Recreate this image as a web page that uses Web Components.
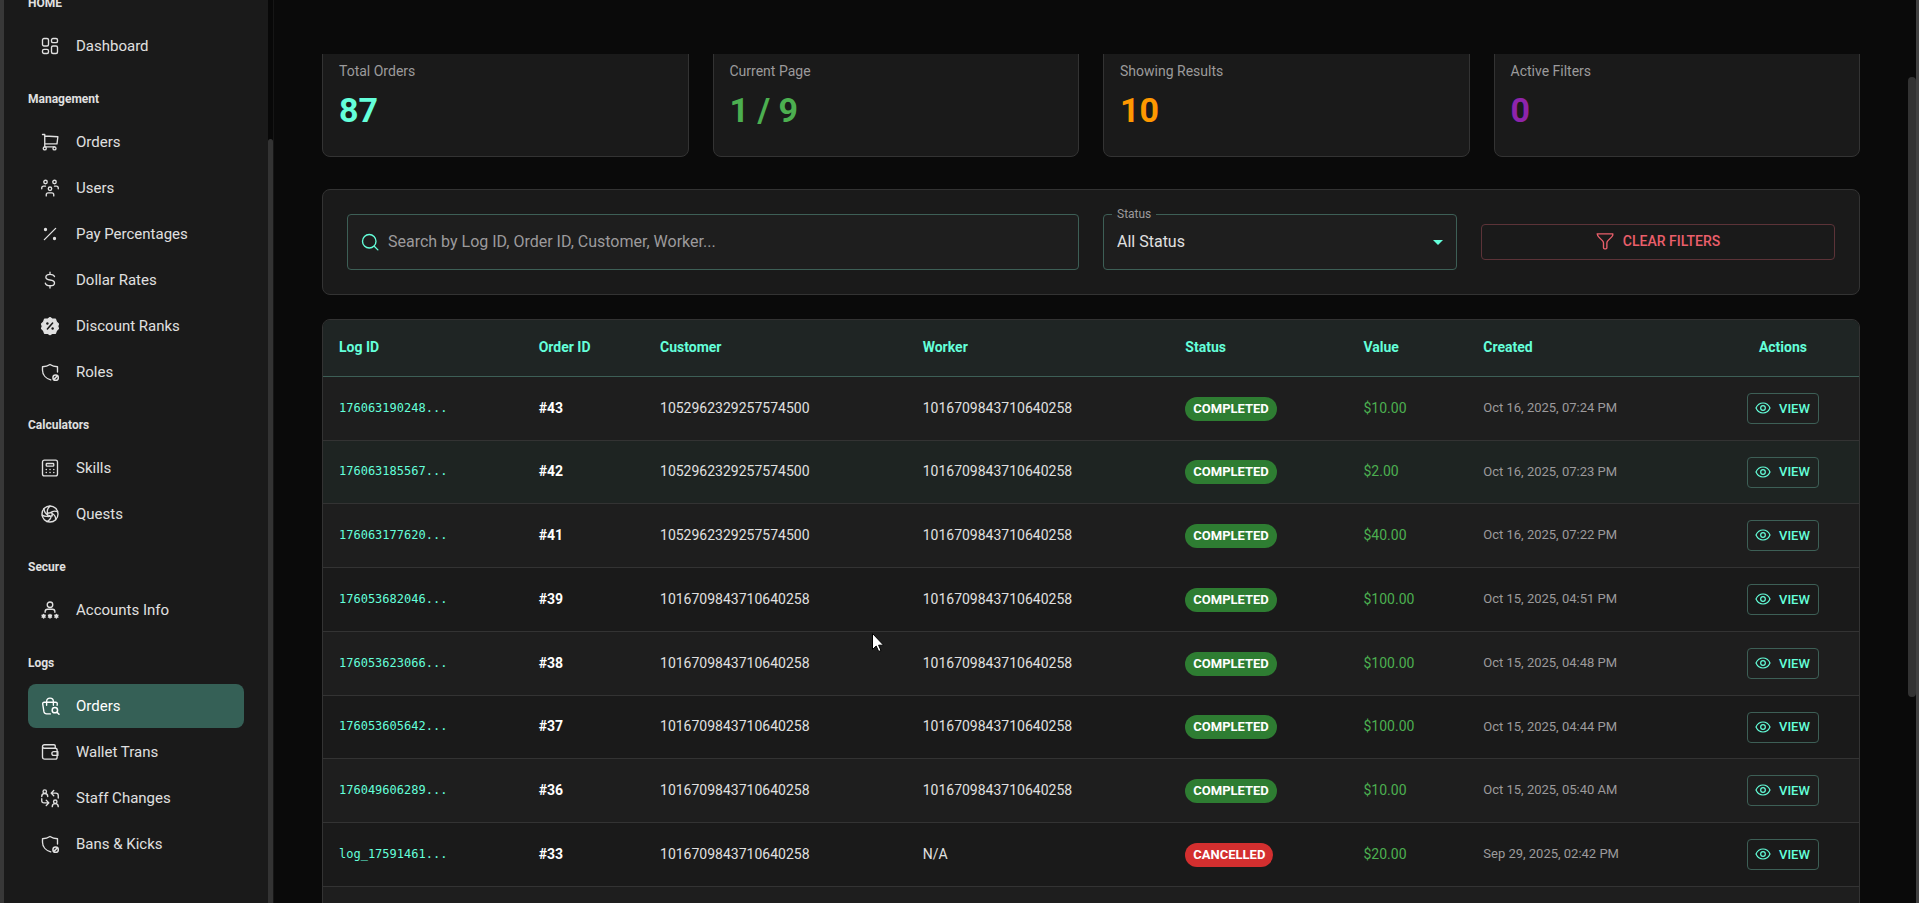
<!DOCTYPE html>
<html lang="en">
<head>
<meta charset="utf-8">
<meta name="viewport" content="width=device-width, initial-scale=1">
<title>Order Logs</title>
<style>
    :root {
        --accent: #64ffda;
        --bg: #0a0a0a;
        --panel: #1a1a1a;
        --panel-alt: #1e1e1e;
        --line: #333333;
        --accent-line: #3d5f56;
        --muted: #9c9a9c;
    }
    html, body {
        height: 100%;
        margin: 0;
    }
    body {
        background: var(--bg);
        color: #e0e0e0;
        font-family: Roboto, "Liberation Sans", sans-serif;
        font-size: 14px;
        overflow: hidden;
    }
</style>
</head>
<body>
<admin-app>
    <side-nav slot="nav">
        <nav-group label="HOME">
            <nav-item icon="dashboard">Dashboard</nav-item>
        </nav-group>
        <nav-group label="Management">
            <nav-item icon="cart">Orders</nav-item>
            <nav-item icon="users">Users</nav-item>
            <nav-item icon="percent">Pay Percentages</nav-item>
            <nav-item icon="dollar">Dollar Rates</nav-item>
            <nav-item icon="discount">Discount Ranks</nav-item>
            <nav-item icon="shield">Roles</nav-item>
        </nav-group>
        <nav-group label="Calculators">
            <nav-item icon="calculator">Skills</nav-item>
            <nav-item icon="aperture">Quests</nav-item>
        </nav-group>
        <nav-group label="Secure">
            <nav-item icon="account">Accounts Info</nav-item>
        </nav-group>
        <nav-group label="Logs">
            <nav-item icon="bag" active>Orders</nav-item>
            <nav-item icon="wallet">Wallet Trans</nav-item>
            <nav-item icon="swap">Staff Changes</nav-item>
            <nav-item icon="shield">Bans &amp; Kicks</nav-item>
        </nav-group>
    </side-nav>
    <stat-row>
        <stat-card label="Total Orders" style="--tone: #64ffda">87</stat-card>
        <stat-card label="Current Page" style="--tone: #4caf50">1 / 9</stat-card>
        <stat-card label="Showing Results" style="--tone: #ff9800">10</stat-card>
        <stat-card label="Active Filters" style="--tone: #8e24aa">0</stat-card>
    </stat-row>
    <filter-bar></filter-bar>
    <orders-table></orders-table>
</admin-app>
<mouse-pointer></mouse-pointer>

<script>
const ICONS = {
    dashboard: '<rect x="2" y="2" width="8" height="10" rx="2"/><rect x="14" y="2" width="8" height="5.500" rx="2"/><rect x="14" y="12" width="8" height="10" rx="2"/><rect x="2" y="16.500" width="8" height="5.500" rx="2"/>',
    cart: '<circle cx="5" cy="20.500" r="2"/><circle cx="18" cy="20.500" r="2"/><path d="M18 18.500H5V2H2M5 4l17.500 1-1.200 9.500H5"/>',
    users: '<circle cx="6" cy="4" r="2.300"/><circle cx="18" cy="4" r="2.300"/><circle cx="12" cy="13" r="2.300"/><path d="M1 13v-1c0-1.500 1-2.500 2.500-2.500H6M23 13v-1c0-1.500-1-2.500-2.500-2.500H18M7 22.500V21c0-1.400 1-2.500 2.500-2.500h5c1.500 0 2.500 1.100 2.500 2.500v1.500"/>',
    percent: '<path d="M19.500 4.500l-15 15"/><circle cx="6" cy="6" r="1.300" fill="currentColor"/><circle cx="18" cy="18" r="1.300" fill="currentColor"/>',
    dollar: '<path d="M18 7.500C17.300 5.500 15 4.500 12 4.500c-3.500 0-5.500 1.600-5.500 3.800 0 2.300 2 3.200 5.500 3.700 3.800.5 6 1.500 6 3.900 0 2.200-2.300 3.800-6 3.800-3.300 0-5.600-1.300-6.200-3.400M12 1.500v3M12 19.700v3"/>',
    discount: '<path fill="currentColor" d="M12 .8l3.200 2.200 4-.2 1.300 3.700 2.700 2.800-1 3 1 3-2.700 2.800-1.300 3.700-4-.2-3.200 1.900-3.200-1.900-4 .2-1.300-3.700L.8 15.300l1-3-1-3 2.700-2.800 1.300-3.700 4 .2z"/><path stroke="#1a1a1a" stroke-width="2" d="M15.500 8l-7 8"/><circle cx="8.500" cy="8.700" r="1.600" fill="#1a1a1a" stroke="none"/><circle cx="15.500" cy="15.300" r="1.600" fill="#1a1a1a" stroke="none"/>',
    shield: '<path d="M13 22.500c-6-1.700-11-6.500-11-13V5c3.800 0 7.200-1 10-3 2.800 2 6.200 3 10 3v7"/><circle cx="19.500" cy="19.500" r="3.600" stroke-width="2"/><path stroke-width="2" d="M17.200 21.800l4.600-4.600"/>',
    calculator: '<rect x="2" y="1.500" width="20" height="21" rx="2.500"/><rect x="7" y="6" width="10" height="3.500" rx="1"/><path stroke-width="2" d="M7 14h.1M12 14h.1M17 14h.1M7 18h.1M12 18h.1M17 18h.1"/>',
    aperture: '<circle cx="12" cy="12" r="10.700"/><path d="M12 1.500c-3 2-4 5.500-3.500 9.500M22 9c-3.300-1.600-6.800-.9-10 1.500M19.500 19.500c.3-3.700-1.600-6.700-5-8.500M8 22c3.200-1.400 5.200-4 5.700-7.500M1.500 13.500c3 2 6.500 2 10 .500M4 5c.2 3.700 1.800 6.500 5 8.500M8.500 11l6-1 .5 4.500-5.500 1z"/>',
    account: '<circle cx="12" cy="5" r="3.700"/><path d="M5.500 15v-1c0-2 1.300-3 3.200-3h6.600c1.900 0 3.200 1 3.200 3v1"/><path stroke-width="2" d="M3.500 18v4.500M1.500 19l4 2.400M5.500 19l-4 2.400M12 18v4.500M10 19l4 2.400M14 19l-4 2.400M20.500 18v4.500M18.500 19l4 2.400M22.500 19l-4 2.400"/>',
    bag: '<path d="M12.500 22.500H7.500c-2 0-3.200-1-3.600-3L2.300 9.500C2 7.800 2.900 7 4.500 7h15c1.600 0 2.400.8 2.200 2.500l-.2 1.500M7.500 11V6c0-3 1.800-4.500 4.500-4.500S16.500 3 16.500 6v5"/><circle cx="18.500" cy="17.500" r="3.600" stroke-width="2"/><path stroke-width="2" d="M21.300 20.300L24 23"/>',
    wallet: '<path d="M19 7V4c0-1-.7-1.700-1.700-1.700H4.500C3 2.300 2 3.300 2 4.600S3 7 4.500 7H19c1.500 0 2.500 1 2.500 2.500V19c0 1.500-1 2.500-2.500 2.500H5c-1.900 0-3-1.100-3-3V4.600"/><path d="M22.500 11.500v5H17a2.500 2.500 0 0 1 0-5z"/>',
    swap: '<circle cx="5" cy="3.500" r="2.300"/><path d="M1 10c0-2.500 1.500-4 4-4s4 1.500 4 4"/><circle cx="19" cy="17" r="2.300"/><path d="M15 23.500c0-2.500 1.500-4 4-4s4 1.500 4 4M17 2l-3.500 3.500L17 9M14 5.500h6c2 0 3 1 3 3V12M7 15l3.500 3.500L7 22M10 18.500H4c-2 0-3-1-3-3V13"/>',
    search: '<circle cx="11" cy="11" r="9"/><path d="M18 18l4.500 4.500"/>',
    funnel: '<path d="M1.500 2.500h21c.2 2-.2 2.800-1.500 4l-5 5c-1 1-1.500 1.600-1.500 3V21c0 1-.7 1.500-1.500 1.500h-1.500c-1 0-1.500-.6-1.500-1.500v-6.500c0-1.400-.5-2-1.500-3l-5-5c-1.300-1.200-1.700-2-1.500-4z"/>',
    eye: '<path d="M1.500 12C3.500 7.500 7.500 4.500 12 4.500s8.500 3 10.500 7.500c-2 4.500-6 7.500-10.500 7.500S3.500 16.500 1.500 12z"/><circle cx="12" cy="12" r="3.500"/>'
};

const ORDERS = [
    ['176063190248...', 43, '1052962329257574500', '1016709843710640258', 'COMPLETED', '$10.00', 'Oct 16, 2025, 07:24 PM'],
    ['176063185567...', 42, '1052962329257574500', '1016709843710640258', 'COMPLETED', '$2.00', 'Oct 16, 2025, 07:23 PM'],
    ['176063177620...', 41, '1052962329257574500', '1016709843710640258', 'COMPLETED', '$40.00', 'Oct 16, 2025, 07:22 PM'],
    ['176053682046...', 39, '1016709843710640258', '1016709843710640258', 'COMPLETED', '$100.00', 'Oct 15, 2025, 04:51 PM'],
    ['176053623066...', 38, '1016709843710640258', '1016709843710640258', 'COMPLETED', '$100.00', 'Oct 15, 2025, 04:48 PM'],
    ['176053605642...', 37, '1016709843710640258', '1016709843710640258', 'COMPLETED', '$100.00', 'Oct 15, 2025, 04:44 PM'],
    ['176049606289...', 36, '1016709843710640258', '1016709843710640258', 'COMPLETED', '$10.00', 'Oct 15, 2025, 05:40 AM'],
    ['log_17591461...', 33, '1016709843710640258', 'N/A', 'CANCELLED', '$20.00', 'Sep 29, 2025, 02:42 PM']
];

class UiIcon extends HTMLElement {
    connectedCallback() {
        this.attachShadow({ mode: 'open' });
        this.shadowRoot.innerHTML = `
            <style>
                :host {
                    display: block;
                    flex: none;
                    width: 18px;
                    height: 18px;
                }
                svg {
                    display: block;
                    width: 100%;
                    height: 100%;
                    overflow: visible;
                }
            </style>
            <svg viewBox="0 0 24 24" fill="none" stroke="currentColor" stroke-width="1.8" stroke-linecap="round" stroke-linejoin="round" aria-hidden="true">
                ${ICONS[this.getAttribute('name')]}
            </svg>
        `;
    }
}

class AdminApp extends HTMLElement {
    connectedCallback() {
        this.attachShadow({ mode: 'open' });
        this.shadowRoot.innerHTML = `
            <style>
                :host {
                    display: flex;
                    height: 100vh;
                    border-left: 4px solid #383838;
                    border-right: 3px solid #414141;
                    box-sizing: border-box;
                }
                .shell {
                    flex: 1;
                    min-width: 0;
                    display: flex;
                    flex-direction: column;
                    border-left: 1px solid #161616;
                }
                header {
                    flex: none;
                    height: 54px;
                }
                main {
                    flex: 1;
                    min-height: 0;
                    overflow: hidden;
                    padding: 0 48px;
                }
                /* page is scrolled a little under the top bar */
                .content {
                    display: flex;
                    flex-direction: column;
                    margin-top: -10px;
                }
                .scroll {
                    flex: none;
                    width: 8px;
                    display: grid;
                    grid-template-rows: 77fr 620fr 206fr;
                }
                .thumb {
                    grid-row: 2;
                    background: #333333;
                    border-radius: 4px;
                }
            </style>
            <slot name="nav"></slot>
            <div class="shell">
                <header></header>
                <main><div class="content"><slot></slot></div></main>
            </div>
            <div class="scroll"><div class="thumb"></div></div>
        `;
    }
}

class SideNav extends HTMLElement {
    connectedCallback() {
        this.attachShadow({ mode: 'open' });
        this.shadowRoot.innerHTML = `
            <style>
                :host {
                    display: flex;
                    flex: none;
                    width: 269px;
                    overflow: hidden;
                    background: var(--panel);
                }
                nav {
                    flex: 1;
                    margin-top: -26px;
                    padding: 0 24px;
                }
                .scroll {
                    width: 5px;
                    display: grid;
                    grid-template-rows: 139fr 764fr;
                    background: #080808;
                }
                .thumb {
                    grid-row: 2;
                    background: #333333;
                    border-radius: 3px 3px 0 0;
                }
            </style>
            <nav><slot></slot></nav>
            <div class="scroll"><div class="thumb"></div></div>
        `;
    }
}

class NavGroup extends HTMLElement {
    connectedCallback() {
        this.attachShadow({ mode: 'open' });
        this.shadowRoot.innerHTML = `
            <style>
                :host {
                    display: block;
                }
                h2 {
                    margin: 0;
                    padding: 19px 0 11px;
                    font-size: 12px;
                    line-height: 20px;
                    font-weight: 700;
                }
            </style>
            <h2>${this.getAttribute('label')}</h2>
            <slot></slot>
        `;
    }
}

class NavItem extends HTMLElement {
    connectedCallback() {
        this.attachShadow({ mode: 'open' });
        this.shadowRoot.innerHTML = `
            <style>
                :host {
                    display: block;
                    margin-bottom: 2px;
                }
                a {
                    display: flex;
                    align-items: center;
                    gap: 17px;
                    height: 44px;
                    padding: 0 13px;
                    border-radius: 8px;
                    color: inherit;
                    font-size: 15px;
                    text-decoration: none;
                }
                :host([active]) a {
                    background: #356056;
                    color: #ffffff;
                }
            </style>
            <a href="#"><ui-icon name="${this.getAttribute('icon')}"></ui-icon><slot></slot></a>
        `;
    }
}

class StatRow extends HTMLElement {
    connectedCallback() {
        this.attachShadow({ mode: 'open' });
        this.shadowRoot.innerHTML = `
            <style>
                :host {
                    display: grid;
                    grid-template-columns: repeat(4, 1fr);
                    gap: 24px;
                    margin-bottom: 32px;
                }
            </style>
            <slot></slot>
        `;
    }
}

class StatCard extends HTMLElement {
    connectedCallback() {
        this.attachShadow({ mode: 'open' });
        this.shadowRoot.innerHTML = `
            <style>
                :host {
                    display: block;
                    padding: 16px 16px 24px;
                    background: var(--panel);
                    border: 1px solid var(--line);
                    border-radius: 8px;
                }
                .label {
                    margin-bottom: 8px;
                    line-height: 20px;
                    color: var(--muted);
                }
                .value {
                    font-size: 34px;
                    line-height: 43px;
                    font-weight: 700;
                    color: var(--tone);
                }
            </style>
            <div class="label">${this.getAttribute('label')}</div>
            <div class="value"><slot></slot></div>
        `;
    }
}

class FilterBar extends HTMLElement {
    connectedCallback() {
        this.attachShadow({ mode: 'open' });
        this.shadowRoot.innerHTML = `
            <style>
                :host {
                    display: grid;
                    grid-template-columns: repeat(12, 1fr);
                    align-items: center;
                    gap: 24px;
                    padding: 24px;
                    margin-bottom: 24px;
                    background: var(--panel);
                    border: 1px solid var(--line);
                    border-radius: 8px;
                }
                .field {
                    position: relative;
                    display: flex;
                    align-items: center;
                    height: 56px;
                    box-sizing: border-box;
                    background: var(--panel-alt);
                    border: 1px solid var(--accent-line);
                    border-radius: 4px;
                }
                .search {
                    grid-column: span 6;
                    gap: 9px;
                    padding: 0 13px;
                    color: var(--accent);
                }
                .status, button {
                    grid-column: span 3;
                }
                input, select {
                    flex: 1;
                    min-width: 0;
                    height: 54px;
                    box-sizing: border-box;
                    padding: 0 0 2px;
                    border: 0;
                    outline: 0;
                    background: none;
                    color: #e0e0e0;
                    font: inherit;
                    font-size: 16px;
                    appearance: none;
                }
                input::placeholder {
                    color: var(--muted);
                    opacity: 1;
                }
                select {
                    padding: 0 13px 2px;
                }
                .status label {
                    position: absolute;
                    top: -8px;
                    left: 8px;
                    padding: 0 5px;
                    font-size: 12px;
                    line-height: 14px;
                    color: var(--muted);
                    background: linear-gradient(var(--panel) 50%, var(--panel-alt) 50%);
                }
                .caret {
                    position: absolute;
                    right: 13px;
                    border: 5px solid transparent;
                    border-top-color: var(--accent);
                    border-bottom: 0;
                    pointer-events: none;
                }
                button {
                    display: flex;
                    align-items: center;
                    justify-content: center;
                    gap: 9px;
                    height: 36px;
                    padding: 0 0 2px;
                    background: none;
                    border: 1px solid #5c3338;
                    border-radius: 4px;
                    color: #ea5f6b;
                    font: inherit;
                    font-weight: 500;
                }
            </style>
            <div class="field search">
                <ui-icon name="search"></ui-icon>
                <input type="text" aria-label="Search orders" placeholder="Search by Log ID, Order ID, Customer, Worker...">
            </div>
            <div class="field status">
                <label for="status">Status</label>
                <select id="status"><option>All Status</option></select>
                <span class="caret"></span>
            </div>
            <button type="button"><ui-icon name="funnel"></ui-icon>CLEAR FILTERS</button>
        `;
    }
}

class StatusBadge extends HTMLElement {
    connectedCallback() {
        this.attachShadow({ mode: 'open' });
        this.shadowRoot.innerHTML = `
            <style>
                :host {
                    display: inline-block;
                    vertical-align: middle;
                    padding: 0 8px;
                    border-radius: 12px;
                    background: #2e7d32;
                    color: #ffffff;
                    font-size: 13px;
                    line-height: 24px;
                    font-weight: 700;
                }
                :host([kind="CANCELLED"]) {
                    background: #d32f2f;
                }
            </style>
            <slot></slot>
        `;
    }
}

class OrdersTable extends HTMLElement {
    connectedCallback() {
        this.attachShadow({ mode: 'open' });
        this.shadowRoot.innerHTML = `
            <style>
                :host {
                    display: block;
                    overflow: hidden;
                    background: var(--panel);
                    border: 1px solid var(--line);
                    border-radius: 8px;
                }
                table {
                    width: 100%;
                    table-layout: fixed;
                    border-collapse: separate;
                    border-spacing: 0;
                }
                th, td {
                    box-sizing: border-box;
                    padding: 0 16px 2px;
                    text-align: left;
                    border-bottom: 1px solid var(--line);
                }
                th {
                    height: 57px;
                    background: #1f2524;
                    border-color: var(--accent-line);
                    color: var(--accent);
                    font-weight: 700;
                }
                td {
                    height: 64px;
                }
                tr:nth-child(4n + 2) td {
                    height: 63px;
                }
                tbody tr:nth-child(odd) {
                    background: var(--panel-alt);
                }
                tbody tr:nth-child(2) {
                    background: #1e2422;
                }
                th:last-child, td:last-child {
                    text-align: center;
                }
                .log {
                    color: var(--accent);
                    font-family: "DejaVu Sans Mono", monospace;
                    font-size: 12px;
                }
                .order {
                    color: #ffffff;
                    font-weight: 700;
                }
                .value {
                    color: #4caf50;
                }
                .date {
                    color: var(--muted);
                    font-size: 13px;
                }
                .control {
                    padding-bottom: 0;
                }
                button {
                    display: inline-flex;
                    align-items: center;
                    gap: 8px;
                    height: 31px;
                    padding: 0 8px 1px 7px;
                    vertical-align: middle;
                    background: none;
                    border: 1px solid var(--accent-line);
                    border-radius: 4px;
                    color: var(--accent);
                    font: inherit;
                    font-size: 13px;
                    font-weight: 500;
                }
                button ui-icon {
                    width: 16px;
                    height: 16px;
                }
            </style>
            <table>
                <colgroup>
                    <col style="width: 13%"><col style="width: 7.9%"><col style="width: 17.1%"><col style="width: 17.1%">
                    <col style="width: 11.6%"><col style="width: 7.8%"><col style="width: 15.6%"><col>
                </colgroup>
                <thead>
                    <tr><th>Log ID</th><th>Order ID</th><th>Customer</th><th>Worker</th><th>Status</th><th>Value</th><th>Created</th><th>Actions</th></tr>
                </thead>
                <tbody>
                    ${ORDERS.map(([log, id, customer, worker, status, value, date]) => `
                        <tr>
                            <td class="log">${log}</td>
                            <td class="order">#${id}</td>
                            <td>${customer}</td>
                            <td>${worker}</td>
                            <td class="control"><status-badge kind="${status}">${status}</status-badge></td>
                            <td class="value">${value}</td>
                            <td class="date">${date}</td>
                            <td class="control"><button type="button"><ui-icon name="eye"></ui-icon>VIEW</button></td>
                        </tr>
                    `).join('')}
                    <tr><td colspan="8"></td></tr>
                </tbody>
            </table>
        `;
    }
}

class MousePointer extends HTMLElement {
    connectedCallback() {
        this.attachShadow({ mode: 'open' });
        this.shadowRoot.innerHTML = `
            <style>
                :host {
                    position: absolute;
                    left: 872px;
                    top: 633px;
                    pointer-events: none;
                }
                svg {
                    display: block;
                }
            </style>
            <svg width="12" height="19" viewBox="0 0 12 19" aria-hidden="true">
                <path d="M.5.5v16l3.700-3.500 2.500 5.500 2.300-1-2.400-5.300h5z" fill="#fff" stroke="#000"/>
            </svg>
        `;
    }
}

customElements.define('ui-icon', UiIcon);
customElements.define('admin-app', AdminApp);
customElements.define('side-nav', SideNav);
customElements.define('nav-group', NavGroup);
customElements.define('nav-item', NavItem);
customElements.define('stat-row', StatRow);
customElements.define('stat-card', StatCard);
customElements.define('filter-bar', FilterBar);
customElements.define('status-badge', StatusBadge);
customElements.define('orders-table', OrdersTable);
customElements.define('mouse-pointer', MousePointer);
</script>
</body>
</html>
